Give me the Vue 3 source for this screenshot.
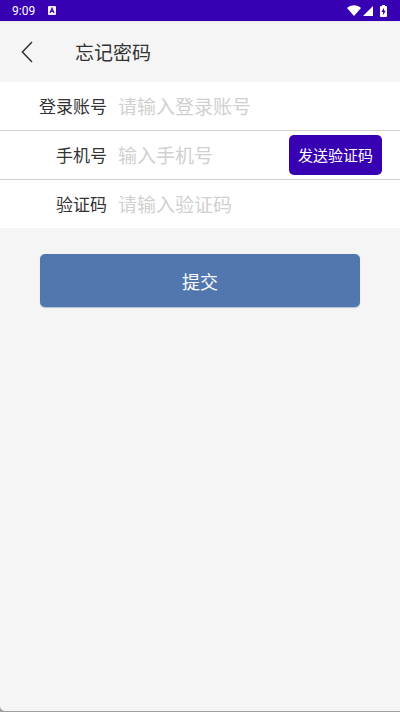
<script setup>
import { ref } from 'vue'

const account = ref('')
const phone = ref('')
const code = ref('')
</script>

<template>
  <div class="device">
    <div class="screen">
      <div class="status">
        <span class="time">9:09</span>
        <svg class="app-badge" width="8" height="9" viewBox="0 0 8 9" aria-hidden="true">
          <rect width="8" height="9" rx="1" fill="#f3eefb" />
          <path d="M2 7 L4 2.2 L6 7 M2.8 5.4 H5.2" fill="none" stroke="#3700b3" stroke-width="1.1" />
        </svg>
        <div class="signals">
          <svg width="14" height="11" viewBox="0 0 14 11" aria-hidden="true">
            <path d="M0 3 C4 -0.7 10 -0.7 14 3 L7 11 Z" fill="#fff" />
          </svg>
          <svg width="10" height="10" viewBox="0 0 10 10" aria-hidden="true">
            <path d="M10 0 V10 H0 Z" fill="#fff" />
          </svg>
          <svg class="battery" width="7" height="12" viewBox="0 0 7 12" aria-hidden="true">
            <path d="M2 0 H5 V1 H6 Q7 1 7 2 V11 Q7 12 6 12 H1 Q0 12 0 11 V2 Q0 1 1 1 H2 Z" fill="#fff" />
            <path d="M4 2.8 L1.4 7 H3.1 V10.2 L5.7 5.8 H4 Z" fill="#3700b3" />
          </svg>
        </div>
      </div>

      <header class="header">
        <button class="back" type="button" aria-label="返回">
          <svg width="12" height="22" viewBox="0 0 12 22" aria-hidden="true">
            <path d="M11 1 L1.4 11 L11 21" fill="none" stroke="#333" stroke-width="1.5" />
          </svg>
        </button>
        <h1 class="title">忘记密码</h1>
      </header>

      <form @submit.prevent>
        <div class="row">
          <label for="account">登录账号</label>
          <input id="account" v-model="account" type="text" placeholder="请输入登录账号" />
        </div>
        <div class="row">
          <label for="phone">手机号</label>
          <input id="phone" v-model="phone" type="tel" placeholder="输入手机号" />
          <button class="send" type="button">发送验证码</button>
        </div>
        <div class="row">
          <label for="code">验证码</label>
          <input id="code" v-model="code" type="text" placeholder="请输入验证码" />
        </div>
        <div class="actions">
          <button class="submit" type="submit">提交</button>
        </div>
      </form>
    </div>
  </div>
</template>

<style>
body {
  margin: 0;
}
</style>

<style scoped>
.device {
  box-sizing: border-box;
  display: flex;
  min-height: 100vh;
  padding-bottom: 1px;
  background: #a0a0a0;
  font-family: Roboto, "Noto Sans CJK SC", sans-serif;
}
.screen {
  flex: 1;
  min-width: 0;
  background: #f5f5f5;
  border-bottom-left-radius: 5px;
}
.status {
  box-sizing: border-box;
  display: flex;
  align-items: center;
  height: 22px;
  padding: 0 13px 0 12px;
  background: #3700b3;
  border-bottom: 1px solid #ece6f6;
  color: #fff;
}
.time {
  padding-top: 2px;
  font-size: 12px;
  line-height: 19px;
}
.app-badge {
  margin-left: 13px;
}
.signals {
  display: flex;
  align-items: center;
  gap: 2px;
  margin-left: auto;
}
.battery {
  margin-left: 5px;
}
.header {
  display: flex;
  align-items: center;
  height: 60px;
}
.back {
  display: flex;
  justify-content: center;
  width: 54px;
  padding: 12px 0;
  border: 0;
  background: none;
}
.title {
  margin: 0 0 0 21px;
  padding-top: 4px;
  color: #333;
  font-size: 19px;
  font-weight: 400;
  line-height: 28px;
}
.row {
  display: flex;
  align-items: center;
  height: 48px;
  padding-right: 18px;
  background: #fff;
}
.row + .row {
  border-top: 1px solid #d2d2d2;
}
label {
  width: 107px;
  padding-top: 2px;
  color: #333;
  font-size: 17px;
  line-height: 24px;
  text-align: right;
}
input {
  flex: 1;
  min-width: 0;
  height: 40px;
  margin-left: 11px;
  padding: 2px 0 0;
  border: 0;
  outline: 0;
  background: none;
  color: #333;
  font-family: inherit;
  font-size: 19px;
}
input::placeholder {
  color: #d0d0d0;
  opacity: 1;
}
.send {
  height: 40px;
  padding: 0 9px 2px;
  border: 0;
  border-radius: 5px;
  background: #3700b3;
  color: #fff;
  font-family: inherit;
  font-size: 15px;
}
.actions {
  padding: 26px 40px;
}
.submit {
  display: block;
  width: 100%;
  height: 53px;
  border: 0;
  border-radius: 5px;
  background: #5277af;
  box-shadow: 0 1px 1px #b4bfd0;
  color: #fff;
  font-family: inherit;
  font-size: 18px;
}
</style>
